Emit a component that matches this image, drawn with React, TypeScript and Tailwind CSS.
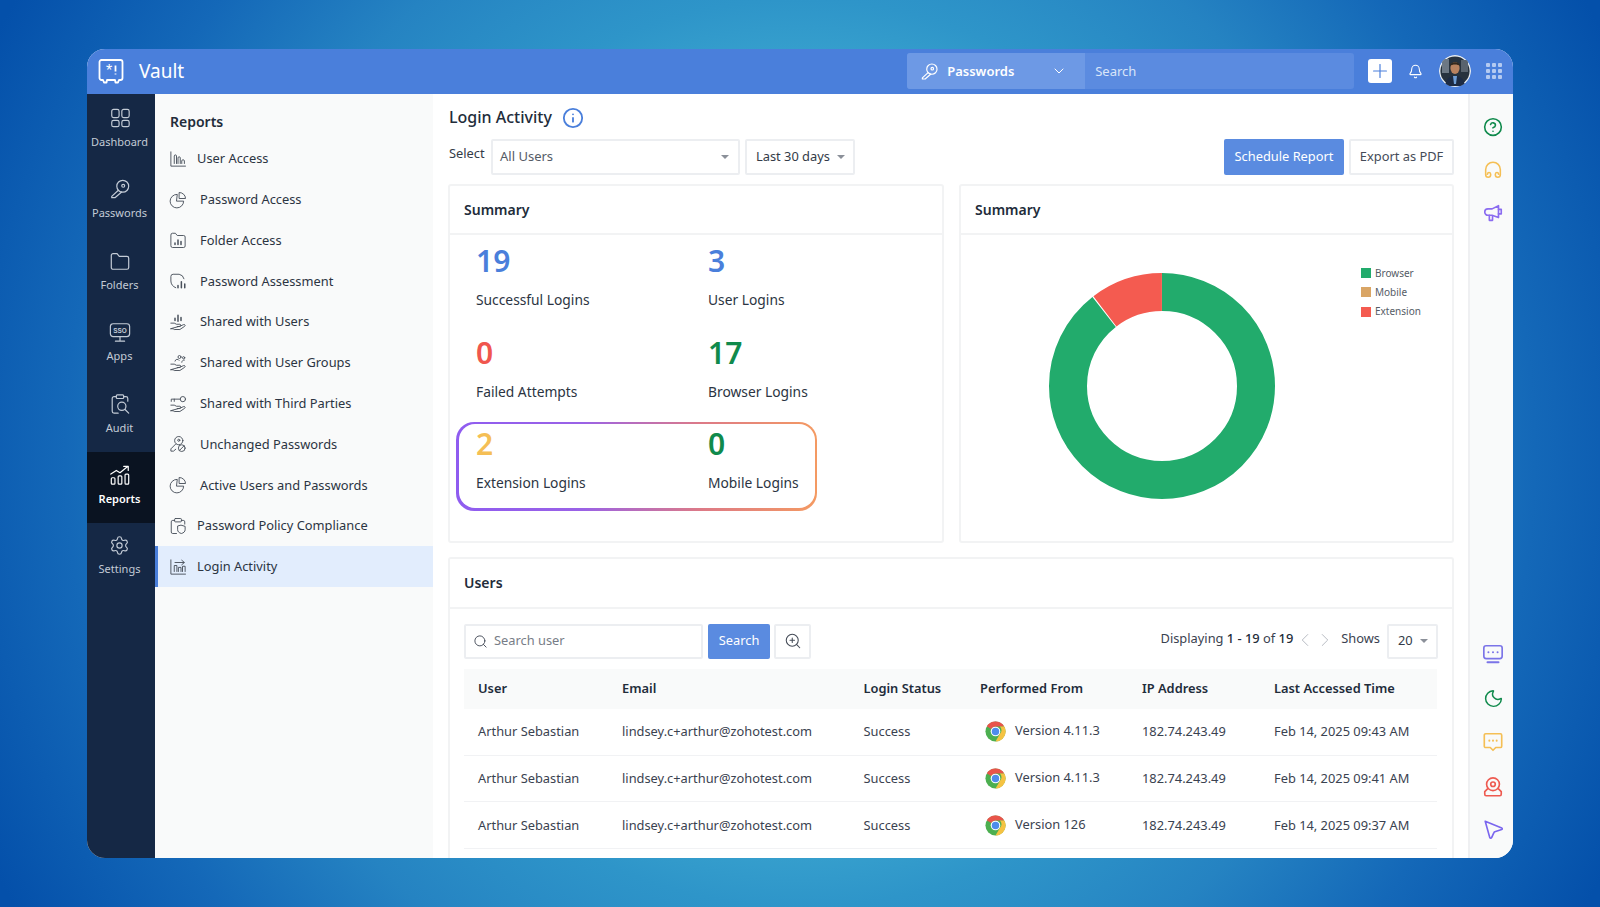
import { Bell, ChevronDown, ChevronLeft, ChevronRight, CircleHelp, Info, Moon, Plus, Search, Settings, ZoomIn } from "lucide-react";
import type { ReactNode } from "react";

function Ico({ children, size = 18, w = 1.5, className = "" }: { children: ReactNode; size?: number; w?: number; className?: string }) {
  return (
    <svg width={size} height={size} viewBox="0 0 24 24" fill="none" stroke="currentColor" strokeWidth={w} strokeLinecap="round" strokeLinejoin="round" className={className}>
      {children}
    </svg>
  );
}

const KEY = (
  <>
    <circle cx="15" cy="9" r="6.5" />
    <circle cx="15.5" cy="8.5" r="1.6" />
    <path d="M10.2 13.4 3 20v1.5h3.5l7.3-6.3" />
  </>
);

const NAV: { label: string; active?: boolean; icon: ReactNode }[] = [
  { label: "Dashboard", icon: <><rect x="3" y="2.5" width="8" height="9" rx="2" /><rect x="14" y="2.5" width="8" height="9" rx="2" /><rect x="3" y="14.5" width="8" height="7" rx="2" /><rect x="14" y="14.5" width="8" height="7" rx="2" /></> },
  { label: "Passwords", icon: KEY },
  { label: "Folders", icon: <path d="M2.5 6a2 2 0 0 1 2-2h4.3l2.4 3h8.3a2 2 0 0 1 2 2v10a2 2 0 0 1-2 2h-15a2 2 0 0 1-2-2z" /> },
  { label: "Apps", icon: <><rect x="1.5" y="3" width="21" height="14" rx="3" /><text x="12" y="12.6" textAnchor="middle" fontSize="7" fontWeight="800" fill="currentColor" stroke="none" fontFamily="Liberation Sans, sans-serif">SSO</text><path d="M12 17v4M7 22h10" /></> },
  { label: "Audit", icon: <><path d="M8 4H5.5a2 2 0 0 0-2 2v14a2 2 0 0 0 2 2H10M16 4h2.5a2 2 0 0 1 2 2v3" /><rect x="8" y="2" width="8" height="4" rx="1" /><circle cx="14" cy="14.5" r="4.5" /><path d="m17.5 18 4 4" /></> },
  { label: "Reports", active: true, icon: <><rect x="2.5" y="15" width="4" height="7" rx="1" /><rect x="10" y="13" width="4" height="9" rx="1" /><rect x="17.5" y="11" width="4" height="11" rx="1" /><path d="m2 11 6-4 4 2.5L20 3M16 2.5h5v4.5" /></> },
  { label: "Settings", icon: null },
];

const HAND = <path d="M2.5 13.5H7l3 1.5h4.5c1.6 0 1.6 3 0 3H11m4-.6 4.6-2c1.800-.6 2.600 1.400 1.200 2.400L14.500 22H7l-1.500-1H2.500z" />;

const SUBS: { label: string; pad: string; active?: boolean; icon: ReactNode }[] = [
  { label: "User Access", pad: "ml-[10px]", icon: <><path d="M2.500 2.500V21.500H22" /><path d="M7 18V8c0-2 3-2 3 0v10M12 18v-7.500c0-2 3-2 3 0V18M17 18v-3.500c0-2 3.500-2 3.500 0V18" /></> },
  { label: "Password Access", pad: "ml-[13px]", icon: <><path d="M10.500 4.500a9 9 0 1 0 9 9h-9z" /><path d="M14 2a8 8 0 0 1 8 8h-8z" /></> },
  { label: "Folder Access", pad: "ml-[13px]", icon: <><path d="M2.500 5a2 2 0 0 1 2-2h4l2.500 3h8.500a2 2 0 0 1 2 2v12a2 2 0 0 1-2 2h-15a2 2 0 0 1-2-2z" /><path d="M8 18v-2M12 18v-6M16 18v-4" strokeWidth="2" /></> },
  { label: "Password Assessment", pad: "ml-[13px]", icon: <><path d="M9 21C5 19.500 2.500 16 2.500 12V6a3 3 0 0 1 3-3h8a8 8 0 0 1 6.500 6" /><path d="M12 21v-3M16.500 21v-8M21 21v-5" strokeWidth="2" /></> },
  { label: "Shared with Users", pad: "ml-[13px]", icon: <>{HAND}<path d="M8 10V7M12 11V3M16 10V6" strokeWidth="2" /></> },
  { label: "Shared with User Groups", pad: "ml-[13px]", icon: <>{HAND}<circle cx="14" cy="4" r="2" /><path d="M8 9.500a3 3 0 0 1 5.500-1M17 11a3 3 0 0 1 3.500-3" /><circle cx="19.500" cy="5" r="1.500" /></> },
  { label: "Shared with Third Parties", pad: "ml-[13px]", icon: <>{HAND}<circle cx="18.500" cy="5.500" r="3.500" /><path d="M15 5.500H3v3M7 5.500v3" /></> },
  { label: "Unchanged Passwords", pad: "ml-[13px]", icon: <><circle cx="13" cy="7.500" r="5.500" /><circle cx="13" cy="7" r="1.400" /><path d="M9 12 2.500 18.500V21.500H6l3-2.500" /><circle cx="17" cy="17.500" r="4.500" /><path d="m14 20.500 6-6" /></> },
  { label: "Active Users and Passwords", pad: "ml-[13px]", icon: <><path d="M10.500 4.500a9 9 0 1 0 9 9h-9z" /><path d="M14 2a8 8 0 0 1 8 8h-8z" /></> },
  { label: "Password Policy Compliance", pad: "ml-[10px]", icon: <><path d="M7.500 4.500H5a2 2 0 0 0-2 2V20a2 2 0 0 0 2 2h5M16.500 4.500H19a2 2 0 0 1 2 2v3" /><rect x="7.500" y="2" width="9" height="4.500" rx="1" /><path d="M16.500 11l5 1.500v4.500c0 2.500-2 4.200-5 5-3-.8-5-2.500-5-5v-4.500z" /></> },
  { label: "Login Activity", pad: "ml-[10px]", active: true, icon: <><path d="M2.500 2.500V21.500H22" /><path d="M7 18v-8h3.500v8M12.500 18v-5.500H16V18M18 18v-7h3.500v7" /><path d="M8 6h12M17 3l3.500 3-3.500 3" /></> },
];

const ROWS = [
  ["Version 4.11.3", "Feb 14, 2025 09:43 AM"],
  ["Version 4.11.3", "Feb 14, 2025 09:41 AM"],
  ["Version 126", "Feb 14, 2025 09:37 AM"],
];

function Stat({ n, label, color }: { n: string; label: string; color: string }) {
  return (
    <div className="w-[232px] shrink-0">
      <div className={`h-[32px] text-[30px] leading-[32px] font-semibold ${color}`}>{n}</div>
      <div className="mt-[13px] h-[20px] text-[13.800px] leading-[20px] text-[#2b3442]">{label}</div>
    </div>
  );
}

function Chrome() {
  return (
    <svg width="21" height="21" viewBox="0 0 48 48">
      <circle cx="24" cy="24" r="23" fill="#4CAF50" />
      <path d="M24 1a23 23 0 0 1 20 11.500H24a11.500 11.500 0 0 0-10 6L4 12A23 23 0 0 1 24 1z" fill="#E8544A" />
      <path d="M44 12.500A23 23 0 0 1 24 47l10-17.500a11.500 11.500 0 0 0 0-17z" fill="#F5C242" />
      <circle cx="24" cy="24" r="11" fill="#fff" />
      <circle cx="24" cy="24" r="8.500" fill="#4E8CEB" />
    </svg>
  );
}

function Avatar() {
  return (
    <svg width="32" height="32" viewBox="0 0 32 32" className="rounded-full">
      <circle cx="16" cy="16" r="16" fill="#e9eef2" />
      <circle cx="16" cy="16" r="14.600" fill="#27323e" />
      <rect x="3" y="4" width="7" height="14" fill="#6d7884" />
      <rect x="22" y="5" width="7" height="12" fill="#59636e" />
      <path d="M6 31c1-8 5-10 10-10s9 2 10 10z" fill="#1d2b44" />
      <path d="M14 21h4l-1 8h-2z" fill="#6f9ed6" />
      <ellipse cx="16" cy="13" rx="4.600" ry="6" fill="#b9825f" />
      <path d="M11 11c0-5 10-5 10 0-2-2-8-2-10 0z" fill="#33291f" />
    </svg>
  );
}

export default function App() {
  return (
    <div className="h-[907px] w-full overflow-hidden pl-[87px] pt-[49px] font-['Noto_Sans',sans-serif] bg-[radial-gradient(circle_907px_at_50%_50%,#4cb8d8_0%,#369fcd_44%,#2e95c9_50%,#2583c2_65%,#1468b8_81%,#0450aa_100%)]">
      <div className="flex h-[809px] w-[1426px] flex-col overflow-hidden rounded-[18px] bg-white">
        <header className="flex h-[44.500px] shrink-0 items-center bg-[#4a7fdb] text-white">
          <svg width="26" height="26" viewBox="0 0 26 26" fill="none" stroke="currentColor" strokeWidth="1.800" className="ml-[11px]">
            <path d="M5 22H3.500a2 2 0 0 1-2-2V4a2 2 0 0 1 2-2h19a2 2 0 0 1 2 2v16a2 2 0 0 1-2 2H21l-1 2.500h-2.500L17 22H9l-.500 2.500H6z" strokeLinejoin="round" />
            <text x="11" y="18" textAnchor="middle" fontSize="16" fill="currentColor" stroke="none" fontFamily="Liberation Sans, sans-serif">*</text>
            <path d="M17.500 7.500v6M17.500 15.500v1" />
          </svg>
          <span className="ml-[15px] text-[19px] leading-none">Vault</span>
          <div className="ml-[723px] flex h-[36px] w-[447px] overflow-hidden rounded-[3px] bg-[#5b8be0]">
            <div className="flex w-[178px] items-center bg-[#6d99e5] pl-[13px]">
              <Ico size={19} className="text-white">{KEY}</Ico>
              <span className="ml-[8px] text-[13px] font-semibold">Passwords</span>
              <ChevronDown size={16} strokeWidth={1.500} className="ml-[37px]" />
            </div>
            <span className="ml-[10px] self-center text-[13px] text-[#d9e5f9]">Search</span>
          </div>
          <div className="ml-[14px] flex h-[24px] w-[24px] items-center justify-center rounded-[3px] bg-white">
            <Plus size={22} strokeWidth={1.300} className="text-[#4a7fdb]" />
          </div>
          <Bell size={15} strokeWidth={1.700} className="ml-[16px]" />
          <div className="ml-[16px]"><Avatar /></div>
          <div className="ml-[15px] grid w-[16px] grid-cols-3 gap-[2px]">
            {[...Array(9)].map((_, i) => (
              <span key={i} className="h-[4px] w-[4px] rounded-[1px] bg-[#b4caf1]" />
            ))}
          </div>
        </header>

        <div className="flex min-h-0 flex-1">
          <nav className="w-[68px] shrink-0 bg-[#152845] pt-[1.500px]">
            {NAV.map((n) => (
              <div key={n.label} className={`flex h-[71.400px] flex-col items-center pr-[3px] pt-[12px] ${n.active ? "bg-[#0a1321] text-white" : "text-[#c3cbd6]"}`}>
                {n.icon ? <Ico size={22} w={1.300}>{n.icon}</Ico> : <Settings size={21} strokeWidth={1.300} />}
                <span className={`mt-[5px] text-[11px] leading-[16px] ${n.active ? "font-semibold" : ""}`}>{n.label}</span>
              </div>
            ))}
          </nav>

          <aside className="w-[278px] shrink-0 bg-[#f9fafa]">
            <div className="pl-[15px] pt-[18px] text-[14px] font-semibold leading-[20px] text-[#222c3a]">Reports</div>
            <div className="mt-[7px]">
              {SUBS.map((s) => (
                <div key={s.label} className={`flex h-[40.800px] items-center text-[12.850px] text-[#2b3442] ${s.active ? "border-l-[3px] border-[#4a7fdb] bg-[#e2edfd] pl-[11px]" : "pl-[14px]"}`}>
                  <Ico size={18} w={1.250} className="shrink-0 text-[#4a515c]">{s.icon}</Ico>
                  <span className={s.pad}>{s.label}</span>
                </div>
              ))}
            </div>
          </aside>

          <main className="flex min-w-0 flex-1 flex-col pl-[15px] pr-[14px]">
            <div className="ml-[1px] mt-[11px] flex h-[24px] items-center text-[16px] font-medium text-[#222c3a]">
              Login Activity
              <Info size={22} strokeWidth={2} className="ml-[10px] mt-[2px] text-[#4a7fdb]" />
            </div>

            <div className="ml-[1px] mt-[10px] flex h-[36px] items-center text-[13px] text-[#333b48]">
              <span className="-mt-[5px] w-[42px] text-[12.850px]">Select</span>
              <div className="flex h-full w-[249px] items-center justify-between rounded-[2px] border-2 border-[#eceef1] pl-[7px] pr-[9px] text-[#555c66]">
                <span className="pt-[1px]">All Users</span>
                <span className="h-0 w-0 border-x-[4px] border-t-[4px] border-x-transparent border-t-[#8b9099]" />
              </div>
              <div className="ml-[5px] flex h-full w-[110px] items-center gap-[7px] rounded-[2px] border-2 border-[#eceef1] pl-[9px] text-[12.850px]">
                Last 30 days
                <span className="h-0 w-0 border-x-[4px] border-t-[4px] border-x-transparent border-t-[#8b9099]" />
              </div>
              <button className="ml-auto h-full w-[120px] rounded-[2px] bg-[#5a8be0] text-[12.850px] text-white">Schedule Report</button>
              <button className="ml-[5px] h-full w-[105px] rounded-[2px] border-2 border-[#eceef1] text-[12.850px] text-[#444b57]">Export as PDF</button>
            </div>

            <div className="mt-[9px] flex h-[359px] shrink-0 gap-[15px]">
              <section className="w-[496px] rounded-[3px] border-2 border-[#f2f3f4]">
                <div className="flex h-[49px] items-center border-b-2 border-[#f2f3f4] pl-[14px] text-[14px] font-semibold text-[#222c3a]">Summary</div>
                <div className="pl-[6px] pt-[10px]">
                  <div className="flex pl-[20px]">
                    <Stat n="19" label="Successful Logins" color="text-[#4a7fdb]" />
                    <Stat n="3" label="User Logins" color="text-[#4a7fdb]" />
                  </div>
                  <div className="mt-[27px] flex pl-[20px]">
                    <Stat n="0" label="Failed Attempts" color="text-[#f0564e]" />
                    <Stat n="17" label="Browser Logins" color="text-[#108a4c]" />
                  </div>
                  <div className="mt-[20px] h-[89px] w-[361px] rounded-[18px] bg-[linear-gradient(90deg,#8f5cf0_0%,#9a62e6_35%,#dd7a86_68%,#f49a62_100%)] p-[2.500px]">
                    <div className="flex h-full rounded-[16px] bg-white pl-[17.500px] pt-[4px]">
                      <Stat n="2" label="Extension Logins" color="text-[#f5bf55]" />
                      <Stat n="0" label="Mobile Logins" color="text-[#108a4c]" />
                    </div>
                  </div>
                </div>
              </section>

              <section className="flex-1 rounded-[3px] border-2 border-[#f2f3f4]">
                <div className="flex h-[49px] items-center border-b-2 border-[#f2f3f4] pl-[14px] text-[14px] font-semibold text-[#222c3a]">Summary</div>
                <div className="flex">
                  <svg width="230" height="230" viewBox="0 0 230 230" className="ml-[86px] mt-[36px] shrink-0 -rotate-90" fill="none" strokeWidth="38">
                    <circle cx="115" cy="115" r="94" stroke="#22ab6c" strokeDasharray="527.400 63.200" />
                    <circle cx="115" cy="115" r="94" stroke="#f45b50" strokeDasharray="61.200 529.400" strokeDashoffset="-528.400" />
                  </svg>
                  <ul className="ml-[84px] mt-[29px] text-[10px] leading-[19.300px] text-[#555c66]">
                    <li className="flex items-center gap-[4px]"><span className="h-[10px] w-[10px] bg-[#22ab6c]" />Browser</li>
                    <li className="flex items-center gap-[4px]"><span className="h-[10px] w-[10px] bg-[#d9a565]" />Mobile</li>
                    <li className="flex items-center gap-[4px]"><span className="h-[10px] w-[10px] bg-[#f45b50]" />Extension</li>
                  </ul>
                </div>
              </section>
            </div>

            <section className="mt-[14px] min-h-0 flex-1 rounded-t-[3px] border-x-2 border-t-2 border-[#f2f3f4] text-[12.850px] text-[#3a4250]">
              <div className="flex h-[50px] items-center border-b-2 border-[#f2f3f4] pl-[14px] text-[14px] font-semibold text-[#222c3a]">Users</div>
              <div className="px-[14px] pt-[15px]">
                <div className="flex h-[35px] items-center">
                  <div className="flex h-full w-[239px] items-center rounded-[2px] border-2 border-[#eceef1] pl-[7px] text-[#777d87]">
                    <Search size={15} strokeWidth={1.500} className="text-[#444b57]" />
                    <span className="ml-[6px]">Search user</span>
                  </div>
                  <button className="ml-[5px] h-full w-[62px] rounded-[2px] bg-[#5a8be0] text-white">Search</button>
                  <div className="ml-[4px] flex h-full w-[37px] items-center justify-center rounded-[2px] border-2 border-[#eceef1]">
                    <ZoomIn size={18} strokeWidth={1.400} className="text-[#444b57]" />
                  </div>
                  <span className="ml-auto -mt-[5px]">Displaying <span className="font-medium text-[#222c3a]">1 - 19</span> of <span className="font-medium text-[#222c3a]">19</span></span>
                  <ChevronLeft size={22} strokeWidth={0.900} className="-mt-[2px] ml-[1px] text-[#a9aeb6]" />
                  <ChevronRight size={22} strokeWidth={0.900} className="-mt-[2px] -ml-[2px] text-[#a9aeb6]" />
                  <span className="-mt-[5px] ml-[5px]">Shows</span>
                  <div className="ml-[7px] flex h-full w-[51px] items-center gap-[7px] rounded-[2px] border-2 border-[#eceef1] pl-[9px] text-[#333b48]">
                    20
                    <span className="h-0 w-0 border-x-[4px] border-t-[4px] border-x-transparent border-t-[#8b9099]" />
                  </div>
                </div>
                <table className="mt-[10px] w-[973px] table-fixed border-collapse text-left">
                  <colgroup>
                    <col className="w-[144px]" />
                    <col className="w-[241.500px]" />
                    <col className="w-[116.500px]" />
                    <col className="w-[162px]" />
                    <col className="w-[132px]" />
                    <col className="w-[177px]" />
                  </colgroup>
                  <thead>
                    <tr className="h-[40px] bg-[#f9fafa] font-medium text-[#222c3a]">
                      {["User", "Email", "Login Status", "Performed From", "IP Address", "Last Accessed Time"].map((h) => (
                        <th key={h} className="pl-[14px] font-semibold">{h}</th>
                      ))}
                    </tr>
                  </thead>
                  <tbody>
                    {ROWS.map((r) => (
                      <tr key={r[1]} className="h-[46.700px] border-b border-[#f1f2f4]">
                        <td className="pl-[14px]">Arthur Sebastian</td>
                        <td className="pl-[14px]">lindsey.c+arthur@zohotest.com</td>
                        <td className="pl-[14px]">Success</td>
                        <td className="pl-[19px]">
                          <div className="flex items-center gap-[9px]">
                            <Chrome />
                            <span className="-mt-[2px]">{r[0]}</span>
                          </div>
                        </td>
                        <td className="pl-[14px]">182.74.243.49</td>
                        <td className="pl-[14px]">{r[1]}</td>
                      </tr>
                    ))}
                  </tbody>
                </table>
              </div>
            </section>
          </main>

          <aside className="flex w-[45px] shrink-0 flex-col items-center border-l-2 border-[#eff0f2] bg-[#f9fafa] pb-[18px] pl-[3px] pt-[23px]">
            <CircleHelp size={20} strokeWidth={1.900} className="text-[#108a4c]" />
            <Ico size={22} w={1.700} className="mt-[22px] text-[#f5bf55]">
              <path d="M4 17v-5.500a8 8 0 0 1 16 0V17" />
              <path d="M4 17c0 4 5.500 4 5.500 0 0-3-3.500-3-3.500-.5M20 17c0 4-5.500 4-5.500 0 0-3 3.500-3 3.500-.5" />
            </Ico>
            <Ico size={22} w={1.800} className="mt-[21px] text-[#8b6cf0]">
              <path d="M18 4v13l-7-2.500H6.500a3.500 3.500 0 0 1 0-7H11z" />
              <path d="M18 8h3v5h-3M8 14.500V20h3.500v-4.500" />
            </Ico>
            <Ico size={22} w={1.800} className="mt-auto text-[#7b74e8]">
              <rect x="2" y="3" width="20" height="14" rx="2.500" />
              <path d="M7 10h0M12 10h0M17 10h0M6 21h12" strokeWidth="2.200" />
            </Ico>
            <Moon size={21} strokeWidth={1.700} className="mt-[23px] text-[#108a4c]" />
            <Ico size={22} w={1.800} className="mt-[22px] text-[#f5bf55]">
              <path d="M4 3h16a1.500 1.500 0 0 1 1.500 1.500v12A1.500 1.500 0 0 1 20 18h-5l-3 3-3-3H4a1.500 1.500 0 0 1-1.500-1.500v-12A1.500 1.500 0 0 1 4 3z" />
              <path d="M8 10.500h0M12 10.500h0M16 10.500h0" strokeWidth="2.200" />
            </Ico>
            <Ico size={22} w={1.800} className="mt-[23px] text-[#ee5a50]">
              <circle cx="12" cy="9" r="7" />
              <circle cx="12" cy="9" r="2.500" />
              <path d="M6 14l-3 3v3a1.500 1.500 0 0 0 1.500 1.500h15A1.500 1.500 0 0 0 21 20v-3l-3-3" />
            </Ico>
            <Ico size={22} w={1.800} className="mt-[20px] text-[#7b66ee]">
              <path d="M3.500 3.500 21.500 11c.8.400.8 1.300 0 1.600L14 15c-.5.200-.8.500-1 1l-2.500 5.500c-.5.900-1.500.8-2-.1z" />
            </Ico>
          </aside>
        </div>
      </div>
    </div>
  );
}
